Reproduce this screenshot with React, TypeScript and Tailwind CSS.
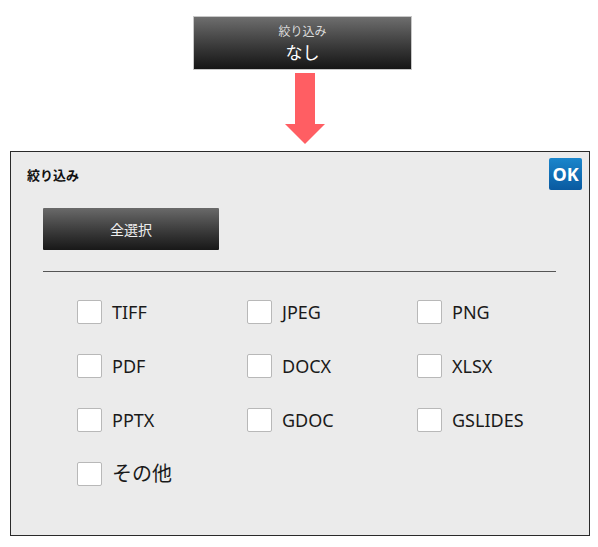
const formats = [
  ['TIFF', 'JPEG', 'PNG'],
  ['PDF', 'DOCX', 'XLSX'],
  ['PPTX', 'GDOC', 'GSLIDES'],
  ['その他'],
]

function Check({ label }: { label: string }) {
  const jp = label === 'その他'
  return (
    <div className="flex w-[170px] items-center gap-[10px]">
      <div className="h-[24px] w-[25px] rounded-[2px] border border-[#b8b8b8] bg-white" />
      <span className={`${jp ? 'text-[20px]' : 'text-[18px]'} leading-none text-[#1a1a1a]`}>{label}</span>
    </div>
  )
}

export default function App() {
  return (
    <div
      className="h-[547px] w-[598px] bg-white"
      style={{ fontFamily: '"Noto Sans", "Noto Sans CJK JP", sans-serif' }}
    >
      <div className="pt-[16px]">
        {/* current filter button */}
        <div className="ml-[193px] flex h-[54px] w-[219px] flex-col items-center justify-center border border-[#c8c8c8] bg-gradient-to-b from-[#6e6e6e] to-[#161616]">
          <span className="text-[12px] leading-none text-[#dcdcdc]">絞り込み</span>
          <span className="mt-[6px] text-[17px] leading-none text-white">なし</span>
        </div>

        {/* arrow */}
        <div className="ml-[284px] mt-[3px] flex w-[41px] flex-col items-center">
          <div className="h-[51px] w-[20px] bg-[#ff5e63]" />
          <div className="h-0 w-0 border-x-[20.5px] border-t-[20px] border-x-transparent border-t-[#ff5e63]" />
        </div>

        {/* panel */}
        <div className="ml-[10px] mt-[7px] h-[385px] w-[580px] border border-[#2a2a2a] bg-[#ebebeb]">
          <div className="flex items-start justify-between">
            <span className="ml-[16px] mt-[14px] text-[13px] font-bold text-[#111]">絞り込み</span>
            <div className="mr-[7px] mt-[6px] flex h-[32px] w-[33px] items-center justify-center rounded-[2px] bg-gradient-to-b from-[#1a86cc] to-[#0a5aa0] text-[18px] font-bold text-white">
              OK
            </div>
          </div>

          <div className="ml-[32px] mt-[18px] flex h-[42px] w-[176px] items-center justify-center rounded-[1px] bg-gradient-to-b from-[#6a6a6a] to-[#181818] text-[14px] text-[#eeeeee]">
            全選択
          </div>

          <div className="ml-[32px] mt-[21px] h-px w-[513px] bg-[#555]" />

          <div className="ml-[66px] mt-[28px] flex flex-col gap-[30px]">
            {formats.map((row, i) => (
              <div key={i} className="flex">
                {row.map(f => (
                  <Check key={f} label={f} />
                ))}
              </div>
            ))}
          </div>
        </div>
      </div>
    </div>
  )
}
